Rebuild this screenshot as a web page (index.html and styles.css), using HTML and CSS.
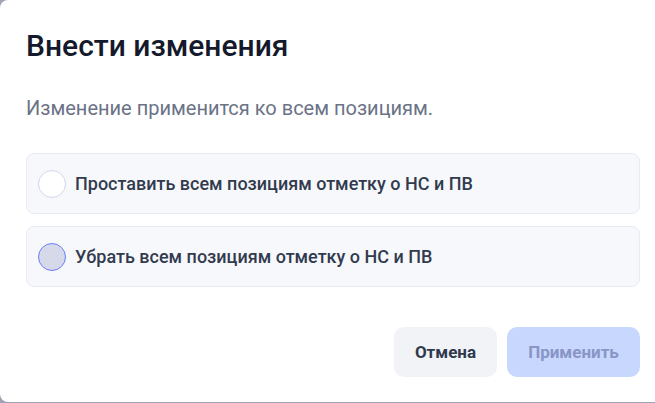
FILE: index.html
```html
<!DOCTYPE html>
<html lang="ru">
<head>
  <meta charset="UTF-8">
  <title>Внести изменения</title>
  <link rel="stylesheet" href="styles.css">
</head>
<body>
  <div class="modal">
    <h1 class="modal-title">Внести изменения</h1>
    <p class="modal-text">Изменение применится ко всем позициям.</p>

    <div class="options">
      <label class="option">
        <span class="radio"></span>
        <span class="option-label">Проставить всем позициям отметку о НС и ПВ</span>
      </label>
      <label class="option">
        <span class="radio radio-checked"></span>
        <span class="option-label">Убрать всем позициям отметку о НС и ПВ</span>
      </label>
    </div>

    <div class="actions">
      <button class="btn btn-cancel">Отмена</button>
      <button class="btn btn-apply" disabled>Применить</button>
    </div>
  </div>
</body>
</html>
```

FILE: styles.css
```css
body {
  margin: 0;
  height: 403px;
  overflow: hidden;
  background-color: #9ea3b4;
  font-family: Roboto, "Noto Sans", sans-serif;
}

.modal {
  width: 666px;
  height: 402px;
  box-sizing: border-box;
  padding: 29px 26px 0 26px;
  background-color: #fff;
  border-radius: 8px;
}

.modal-title {
  margin: 0;
  font-size: 30px;
  line-height: 34px;
  font-weight: 500;
  color: #141a2b;
}

.modal-text {
  margin: 33px 0 0 0;
  font-size: 20px;
  line-height: 24px;
  color: #6b7386;
}

.options {
  margin-top: 33px;
  display: flex;
  flex-direction: column;
  gap: 12px;
}

.option {
  display: flex;
  align-items: center;
  gap: 9px;
  height: 61px;
  box-sizing: border-box;
  padding: 0 11px;
  background-color: #f7f8fc;
  border: 1px solid #e9ebf3;
  border-radius: 8px;
  cursor: pointer;
}

.radio {
  width: 28px;
  height: 28px;
  box-sizing: border-box;
  border-radius: 50%;
  border: 1.5px solid #d3d5ef;
  background-color: #fff;
  flex-shrink: 0;
}

.radio-checked {
  border-color: #6a7ef5;
  background-color: #d6d9e9;
}

.option-label {
  font-size: 18px;
  font-weight: 500;
  color: #323b4e;
}

.actions {
  margin-top: 40px;
  display: flex;
  justify-content: flex-end;
  gap: 10px;
}

.btn {
  height: 50px;
  border: none;
  border-radius: 10px;
  font-family: inherit;
  font-size: 17px;
  font-weight: 700;
  cursor: pointer;
}

.btn-cancel {
  width: 103px;
  background-color: #f1f3f7;
  color: #2f394d;
}

.btn-apply {
  width: 133px;
  background-color: #c8d7fd;
  color: #8995c6;
  cursor: default;
}
```
